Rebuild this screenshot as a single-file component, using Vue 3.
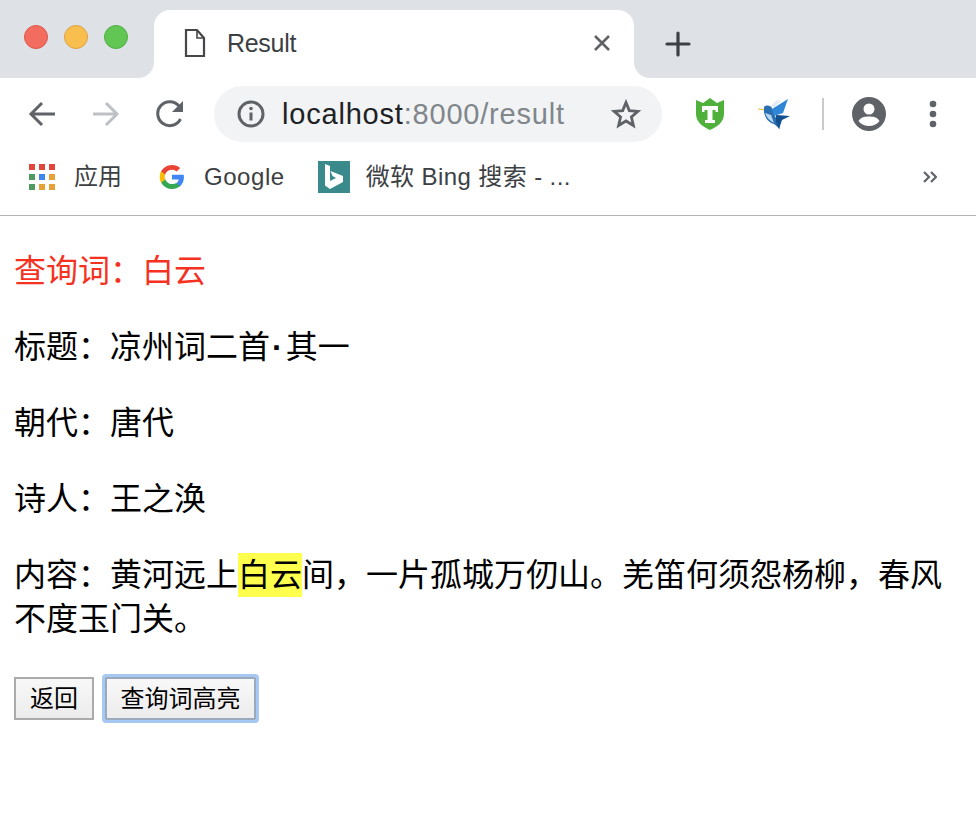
<script setup>
const lines = [
  { label: '朝代\uFF1A', text: '唐代' },
  { label: '诗人\uFF1A', text: '王之涣' },
]
const queryLine = '查询词\uFF1A白云'
const titleHead = '标题\uFF1A凉州词二首'
const contentLabel = '内容\uFF1A黄河远上'
const contentRest = '间\uFF0C一片孤城万仞山。羌笛何须怨杨柳\uFF0C春风不度玉门关。'
const appDots = ['#e2463a','#e2463a','#e2463a','#4f9a5f','#3f86ee','#e5a136','#4f9a5f','#e5a136','#e5a136']
</script>

<template>
  <div class="window">
    <header class="tabstrip">
      <div class="lights">
        <span class="light red"></span>
        <span class="light yellow"></span>
        <span class="light green"></span>
      </div>
      <div class="tab">
        <svg class="doc" width="22" height="30" viewBox="0 0 22 30" fill="none" stroke="#45474a" stroke-width="2.2">
          <path d="M2 2H13L20 10V28H2Z" />
          <path d="M13 2V10H20" stroke-width="1.6" />
        </svg>
        <span class="tab-title">Result</span>
        <svg class="tab-close" width="18" height="18" viewBox="0 0 18 18" stroke="#5f6368" stroke-width="2.6">
          <path d="M2 2L16 16M16 2L2 16" />
        </svg>
      </div>
      <svg class="newtab" width="26" height="26" viewBox="0 0 26 26" stroke="#3c4043" stroke-width="3.2" stroke-linecap="round">
        <path d="M13 2V24M2 13H24" />
      </svg>
    </header>

    <nav class="toolbar">
      <svg class="nav back" width="28" height="26" viewBox="0 0 28 26" fill="none" stroke="#5f6368" stroke-width="3">
        <path d="M27 13H3M14 2L3 13L14 24" />
      </svg>
      <svg class="nav forward" width="28" height="26" viewBox="0 0 28 26" fill="none" stroke="#bdc1c6" stroke-width="3">
        <path d="M1 13H25M14 2L25 13L14 24" />
      </svg>
      <svg class="nav reload" width="30" height="30" viewBox="0 0 30 30" fill="none">
        <path d="M24.5 20A12 12 0 1 1 23 7" stroke="#5f6368" stroke-width="3" />
        <path d="M27 2V13H16Z" fill="#5f6368" />
      </svg>
      <div class="omnibox">
        <svg class="info" width="28" height="28" viewBox="0 0 28 28" fill="none">
          <circle cx="14" cy="14" r="12" stroke="#5f6368" stroke-width="3" />
          <path d="M14 12.5V20.5" stroke="#5f6368" stroke-width="3" />
          <circle cx="14" cy="8.5" r="1.8" fill="#5f6368" />
        </svg>
        <span class="url"><span class="host">localhost</span><span class="path">:8000/result</span></span>
        <svg class="star" width="30" height="30" viewBox="0 0 30 30" fill="none" stroke="#5f6368" stroke-width="2.8" stroke-linejoin="miter">
          <path d="M15 3.5L18.3 11.6L27 12.3L20.4 18L22.4 26.5L15 22L7.6 26.5L9.6 18L3 12.3L11.7 11.6Z" />
        </svg>
      </div>
      <svg class="ext shield" width="30" height="32" viewBox="0 0 30 32">
        <path d="M1 2L8 5L15 0L22 5L29 2V16C29 24 22 29 15 32C8 29 1 24 1 16Z" fill="#4fb03c" />
        <path d="M7 8H23V14H20.5V12H17.5V22H20V25H10V22H12.500V12H9.500V14H7Z" fill="#fff" />
      </svg>
      <svg class="ext bird" width="34" height="32" viewBox="0 0 34 32">
        <path d="M0 10.500L7 11L7 12.500L0 11.500Z" fill="#e4b84a" />
        <path d="M6 9C8 7 12 7 14 10L17 18L20 24L22 31L16 26C11 25 7 20 6 14Z" fill="#2b6fb3" />
        <path d="M7 15C9 20 12 23 16 25L13 17Z" fill="#b9d8ee" />
        <path d="M14 11L30 1L25 15L16 18Z" fill="#2f86d6" />
        <path d="M18 17L32 18L24 22L21 31L18 24Z" fill="#14508f" />
        <path d="M13 9L20 2M15 9L22 3" stroke="#dfe7ee" stroke-width="1.500" />
      </svg>
      <span class="divider"></span>
      <svg class="avatar" width="34" height="34" viewBox="0 0 34 34">
        <circle cx="17" cy="17" r="17" fill="#5f6368" />
        <circle cx="17" cy="12" r="5.500" fill="#fff" />
        <path d="M6.500 24C9 20 13 19.500 17 19.500C21 19.500 25 20 27.500 24C25 27.500 21 29 17 29C13 29 9 27.500 6.500 24Z" fill="#fff" />
      </svg>
      <svg class="kebab" width="8" height="28" viewBox="0 0 8 28" fill="#5f6368">
        <circle cx="4" cy="4" r="3.300" />
        <circle cx="4" cy="14" r="3.300" />
        <circle cx="4" cy="24" r="3.300" />
      </svg>
    </nav>

    <div class="bookmarks">
      <span class="apps"><i v-for="(c, i) in appDots" :key="i" :style="{ background: c }"></i></span>
      <span class="bm bm-apps">应用</span>
      <svg class="g-logo" width="26" height="26" viewBox="0 0 48 48">
        <path fill="#4285f4" d="M46 24.500c0-1.600-.1-3.100-.4-4.500H24v8.700h12.400c-.5 2.800-2.100 5.200-4.500 6.800v5.600h7.300C43.500 36.700 46 31.100 46 24.500z"/>
        <path fill="#34a853" d="M24 46c6.100 0 11.200-2 14.900-5.500l-7.300-5.600c-2 1.300-4.600 2.100-7.600 2.100-5.900 0-10.900-4-12.700-9.300H3.800v5.800C7.500 40.800 15.100 46 24 46z"/>
        <path fill="#fbbc05" d="M11.300 28.700c-.5-1.400-.7-2.900-.7-4.700s.3-3.300.7-4.700v-5.800H3.800C2.300 16.500 1.400 20.100 1.400 24s.9 7.500 2.400 10.500z"/>
        <path fill="#ea4335" d="M24 10.600c3.300 0 6.300 1.100 8.600 3.400l6.500-6.500C35.200 3.900 30.100 1.700 24 1.700 15.100 1.700 7.500 7.200 3.800 13.500l7.500 5.800c1.800-5.300 6.800-8.700 12.700-8.700z"/>
      </svg>
      <span class="bm bm-google">Google</span>
      <svg class="bing" width="32" height="32" viewBox="0 0 32 32">
        <rect width="32" height="32" fill="#3a8a8c" />
        <path d="M7 3L12 5V20L18 17L14.500 15L12.500 10L25 15V21L12 28L7 24.500Z" fill="#fff" />
      </svg>
      <span class="bm bm-bing">微软 Bing 搜索 - ...</span>
      <svg class="more" width="14" height="12" viewBox="0 0 14 12" fill="none" stroke="#5f6368" stroke-width="2.200">
        <path d="M1 1L6 6L1 11M8 1L13 6L8 11" />
      </svg>
    </div>

    <main class="page">
      <p class="query">{{ queryLine }}</p>
      <p>{{ titleHead }}<span class="dot">·</span>其一</p>
      <p v-for="l in lines" :key="l.label">{{ l.label }}{{ l.text }}</p>
      <p>{{ contentLabel }}<mark>白云</mark>{{ contentRest }}</p>
      <div class="actions">
        <button class="btn back-btn" type="button">返回</button>
        <button class="btn focus-btn" type="button">查询词高亮</button>
      </div>
    </main>
  </div>
</template>

<style>
html, body { background: #fff; overflow: hidden; }
</style>

<style scoped>
.window {
  width: 976px;
  height: 816px;
  display: flex;
  flex-direction: column;
  font-family: "Liberation Sans", "Noto Sans CJK SC", sans-serif;
  background: #fff;
}
.tabstrip {
  height: 78px;
  background: #dee1e6;
  display: flex;
  align-items: flex-start;
  flex: none;
}
.lights {
  display: flex;
  gap: 16px;
  padding: 25px 0 0 24px;
  width: 154px;
  box-sizing: border-box;
}
.light {
  width: 24px;
  height: 24px;
  border-radius: 50%;
  box-sizing: border-box;
  border: 1px solid;
}
.red { background: #f26d60; border-color: #dc5648; }
.yellow { background: #f8bf4f; border-color: #dfa03f; }
.green { background: #62c654; border-color: #50ad41; }
.tab {
  width: 480px;
  height: 68px;
  margin-top: 10px;
  background: #fff;
  border-radius: 16px 16px 0 0;
  display: flex;
  align-items: center;
  padding: 0 23px 0 30px;
  box-sizing: border-box;
  position: relative;
}
.tab::before,
.tab::after {
  content: "";
  position: absolute;
  bottom: 0;
  width: 16px;
  height: 16px;
}
.tab::before {
  left: -16px;
  background: radial-gradient(circle at 0 0, #dee1e6 15.5px, #fff 16.5px);
}
.tab::after {
  right: -16px;
  background: radial-gradient(circle at 100% 0, #dee1e6 15.5px, #fff 16.5px);
}
.doc { flex: none; margin-top: -2px; }
.tab-title {
  font-size: 25px;
  color: #3c4043;
  margin-left: 21px;
  margin-top: -2px;
  font-family: "Liberation Sans", sans-serif;
  letter-spacing: -0.3px;
}
.tab-close { margin-left: auto; margin-top: -2px; }
.newtab { margin: 31px 0 0 31px; }
.toolbar {
  height: 72px;
  display: flex;
  align-items: center;
  flex: none;
  position: relative;
}
.nav { flex: none; }
.back { margin-left: 28px; }
.forward { margin-left: 36px; }
.reload { margin-left: 36px; }
.omnibox {
  width: 448px;
  height: 56px;
  margin-left: 28px;
  background: #f1f3f4;
  border-radius: 28px;
  display: flex;
  align-items: center;
  padding: 0 22px 0 23px;
  box-sizing: border-box;
}
.info { flex: none; }
.url {
  margin-left: 17px;
  font-size: 29px;
  letter-spacing: 0.8px;
  white-space: nowrap;
}
.host { color: #202124; }
.path { color: #80868b; }
.star { margin-left: auto; flex: none; position: relative; left: 1px; }
.shield { margin-left: 33px; }
.bird { margin-left: 33px; }
.divider {
  width: 2px;
  height: 32px;
  background: #c8cacc;
  margin-left: 30px;
}
.avatar { margin-left: 28px; }
.kebab { margin-left: 43px; }
.bookmarks {
  height: 66px;
  padding-bottom: 11px;
  box-sizing: border-box;
  border-bottom: 1px solid #b4b4b4;
  display: flex;
  align-items: center;
  flex: none;
  color: #3c4043;
}
.apps {
  display: grid;
  grid-template-columns: repeat(3, 6px);
  gap: 4px;
  margin-left: 29px;
}
.apps i { width: 6px; height: 6px; display: block; }
.bm { font-size: 24px; line-height: 30px; height: 30px; white-space: nowrap; }
.bm-apps { margin-left: 19px; }
.g-logo { margin-left: 37px; flex: none; }
.bm-google { margin-left: 19px; letter-spacing: 0.55px; }
.bing { margin-left: 33px; flex: none; }
.bm-bing { margin-left: 16px; letter-spacing: 0.4px; }
.more { margin-left: auto; margin-right: 39px; flex: none; }
.page {
  padding: 33px 14px 0;
  font-size: 32px;
  line-height: 44px;
  color: #000;
}
.page p {
  margin: 0 0 32px;
  font-family: "Liberation Sans", "Noto Sans CJK SC", sans-serif;
}
.page p.query { color: #f5321f; }
.dot { font-weight: bold; padding: 0 3px 0 2px; }
mark { background: #ffff4d; color: inherit; display: inline-block; height: 44px; }
.actions {
  display: flex;
  gap: 11px;
  padding-top: 4px;
}
.btn {
  height: 43px;
  font-family: "Liberation Sans", "Noto Sans CJK SC", sans-serif;
  font-size: 24px;
  line-height: 1;
  color: #000;
  padding: 0;
  box-sizing: border-box;
  border: 2px solid #ababab;
  background: linear-gradient(#f8f8f8, #ececec);
}
.back-btn { width: 80px; }
.focus-btn {
  width: 151px;
  border-color: #9aa9bc;
  outline: 3px solid #a6c8f2;
  outline-offset: 0;
  border-radius: 1px;
}
</style>
